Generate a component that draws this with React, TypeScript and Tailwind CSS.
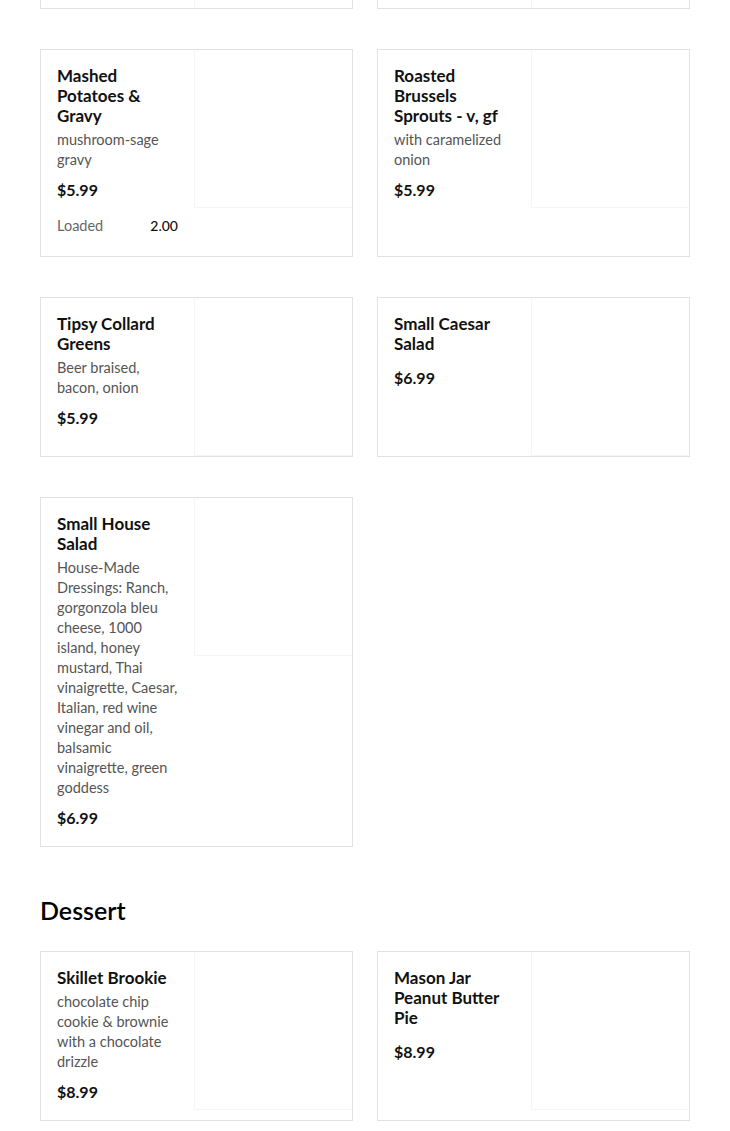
type Item = {
  name: string;
  desc?: string;
  price: string;
  addons?: { label: string; price: string }[];
};

const sides: Item[] = [
  {
    name: 'Mashed Potatoes & Gravy',
    desc: 'mushroom-sage gravy',
    price: '$5.99',
    addons: [{ label: 'Loaded', price: '2.00' }],
  },
  { name: 'Roasted Brussels Sprouts - v, gf', desc: 'with caramelized onion', price: '$5.99' },
  { name: 'Tipsy Collard Greens', desc: 'Beer braised, bacon, onion', price: '$5.99' },
  { name: 'Small Caesar Salad', price: '$6.99' },
  {
    name: 'Small House Salad',
    desc: 'House-Made Dressings: Ranch, gorgonzola bleu cheese, 1000 island, honey mustard,  Thai vinaigrette, Caesar, Italian, red wine vinegar and oil, balsamic vinaigrette, green goddess',
    price: '$6.99',
  },
];

const desserts: Item[] = [
  { name: 'Skillet Brookie', desc: 'chocolate chip cookie & brownie with a chocolate drizzle', price: '$8.99' },
  { name: 'Mason Jar Peanut Butter Pie', price: '$8.99' },
];

function MenuCard({ item }: { item: Item }) {
  return (
    <div className="flex items-start border border-[#e2e2e2] bg-white">
      <div className="w-[153px] shrink-0 px-4 pt-4 pb-[18px]">
        <h3 className="text-[17px] leading-5 font-bold text-[#111]">{item.name}</h3>
        {item.desc ? (
          <p className="mt-1 text-[14.5px] leading-5 text-[#555]">{item.desc}</p>
        ) : (
          <div className="h-1" />
        )}
        <p className="mt-2.5 text-[16px] leading-5 font-bold text-[#111]">{item.price}</p>
        {item.addons && (
          <div className="mt-4 pb-0.5">
            {item.addons.map((a) => (
              <div key={a.label} className="flex items-center justify-between leading-5">
                <span className="text-[14.5px] text-[#666]">{a.label}</span>
                <span className="text-[14px] font-medium text-[#111]">{a.price}</span>
              </div>
            ))}
          </div>
        )}
      </div>
      <div className="h-[158px] flex-1 border-b border-l border-[#f5f5f5] bg-white" />
    </div>
  );
}

export default function App() {
  return (
    <div className="min-h-screen bg-white px-10 pb-10 font-['Lato','Liberation_Sans',sans-serif]">
      <div className="grid grid-cols-2 gap-x-6">
        {[0, 1].map((i) => (
          <div key={i} className="flex h-[9px] border-x border-b border-[#e2e2e2]">
            <div className="w-[153px] shrink-0" />
            <div className="flex-1 border-l border-[#f5f5f5]" />
          </div>
        ))}
      </div>

      <div className="mt-10 grid grid-cols-2 items-stretch gap-x-6 gap-y-10">
        {sides.map((item) => (
          <MenuCard key={item.name} item={item} />
        ))}
      </div>

      <h2 className="mt-[45px] mb-[23px] text-[25px] leading-9 font-semibold text-black">Dessert</h2>

      <div className="grid grid-cols-2 gap-x-6 gap-y-10">
        {desserts.map((item) => (
          <MenuCard key={item.name} item={item} />
        ))}
      </div>
    </div>
  );
}
